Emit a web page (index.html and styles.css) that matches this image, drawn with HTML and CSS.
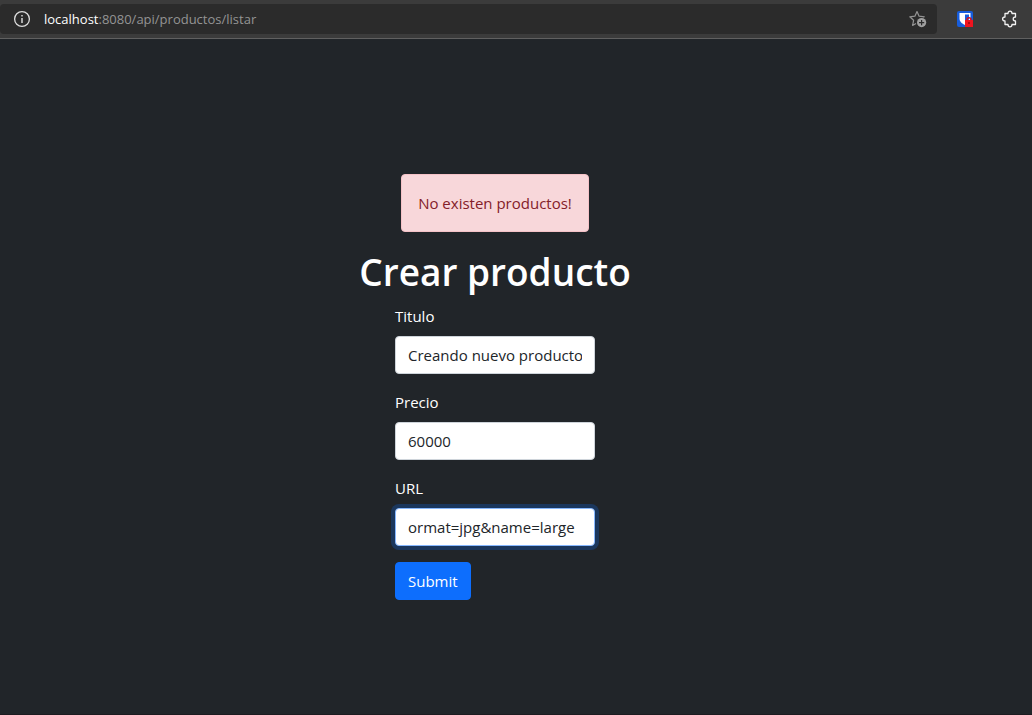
FILE: index.html
```html
<!DOCTYPE html>
<html lang="es">
<head>
<meta charset="utf-8">
<title>Crear producto</title>
<link rel="stylesheet" href="styles.css">
</head>
<body>
<header class="toolbar">
  <div class="address">
    <svg class="info" viewBox="0 0 18 18" aria-hidden="true"><circle cx="9" cy="9" r="7.4" fill="none" stroke="#ddd" stroke-width="1.3"/><path d="M9 8v5M9 5v1.6" stroke="#ccc" stroke-width="1.6"/></svg>
    <span class="url"><span class="host">localhost</span>:8080/api/productos/listar</span>
    <button class="icon-button" type="button" aria-label="Favoritos">
      <svg viewBox="0 0 18 18" aria-hidden="true"><path d="M14 7.200l1.300-.4-5.200-.6L8 1.500 5.900 6.200.8 6.800l3.800 3.500-1 5.100L7 13.500" fill="none" stroke="#949494" stroke-width="1.200" stroke-linejoin="round"/><circle cx="12.600" cy="12.600" r="4.600" fill="#a0a0a0"/><path d="M12.600 10v5.200M10 12.600h5.200" stroke="#2b2b2b" stroke-width="1.200"/></svg>
    </button>
  </div>
  <button class="icon-button" type="button" aria-label="Contraseñas">
    <svg viewBox="0 0 18 18" aria-hidden="true"><rect x="1" y="1" width="16" height="16" rx="2" fill="#175ddc"/><path d="M3.500 3h11v5.500c0 3.200-2.500 5-5.500 6.500-3-1.500-5.500-3.300-5.500-6.500z" fill="#fff"/><path d="M9 4.500h4v4c0 2-1.500 3.200-4 4.500z" fill="#175ddc"/><path d="M11 10.500V9.800a2 2 0 0 1 4 0v.7" fill="none" stroke="#d3121f" stroke-width="1.600"/><rect x="9" y="10" width="8" height="7" fill="#f0141f"/><path d="M13 12v2" stroke="#8c0710" stroke-width="1.300"/></svg>
  </button>
  <button class="icon-button" type="button" aria-label="Extensiones">
    <svg viewBox="0 0 18 18" aria-hidden="true"><path d="M4 3.500h3c0-1.600.8-2.300 2-2.300s2 .7 2 2.300h3.500V7c-1.600 0-2.300.8-2.300 2s.7 2 2.300 2v3.500H11c0 1.600-.8 2.300-2 2.300s-2-.7-2-2.300H4V11c-1.700 0-2.400-.8-2.400-2S2.300 7 4 7z" fill="none" stroke="#f2f2f2" stroke-width="1.300" stroke-linejoin="round"/></svg>
  </button>
</header>
<main class="page">
  <div class="alert" role="alert">No existen productos!</div>
  <h1 class="title">Crear producto</h1>
  <form class="form">
    <div class="field">
      <label for="titulo">Titulo</label>
      <input id="titulo" type="text" value="Creando nuevo producto">
    </div>
    <div class="field">
      <label for="precio">Precio</label>
      <input id="precio" type="text" value="60000">
    </div>
    <div class="field">
      <label for="url">URL</label>
      <input id="url" class="active" type="text" value="ormat=jpg&amp;name=large">
    </div>
    <button class="submit" type="submit">Submit</button>
  </form>
</main>
</body>
</html>
```
FILE: styles.css
```css
* { box-sizing: border-box; }
body {
  margin: 0;
  min-height: 100vh;
  display: flex;
  flex-direction: column;
  background: #212529;
  color: #fff;
  font: 15px/24px "Open Sans", "Noto Sans", sans-serif;
}
.toolbar {
  display: flex;
  align-items: center;
  gap: 27px;
  height: 39px;
  padding-right: 13px;
  background: #3b3b3b;
  border-bottom: 1px solid #606060;
}
.address {
  flex: 1;
  display: flex;
  align-items: center;
  height: 30px;
  margin-right: -8px;
  padding: 0 10px 0 13px;
  gap: 13px;
  background: #2b2b2b;
  border-radius: 4px;
}
.url { flex: 1; font-size: 13px; color: #949494; }
.host { color: #fff; }
.info { width: 18px; height: 18px; }
.icon-button {
  display: flex;
  padding: 0;
  border: 0;
  background: none;
}
.icon-button svg { width: 18px; height: 18px; }
.page {
  flex: 1;
  display: flex;
  flex-direction: column;
  align-items: center;
  padding: 135px 42px 32px 0;
  border-bottom: 1px solid #1d1b20;
}
.alert {
  margin-bottom: 16px;
  padding: 16px;
  background: #f8d7da;
  border: 1px solid #f5c2c7;
  border-radius: 4px;
  color: #842029;
}
.title {
  margin: 0 0 8px;
  font-size: 37px;
  line-height: 48px;
  font-weight: 600;
}
.form { width: 200px; }
.field {
  display: flex;
  flex-direction: column;
  gap: 8px;
  margin-bottom: 16px;
}
.field input {
  width: 100%;
  height: 38px;
  padding: 6px 12px;
  border: 1px solid #ced4da;
  border-radius: 4px;
  background: #fff;
  color: #212529;
  font: inherit;
}
.field .active {
  border-color: #86b7fe;
  box-shadow: 0 0 0 4px rgba(13, 110, 253, 0.25);
}
.submit {
  height: 38px;
  padding: 6px 12px;
  border: 1px solid #0d6efd;
  border-radius: 4px;
  background: #0d6efd;
  color: #fff;
  font: inherit;
}
```
